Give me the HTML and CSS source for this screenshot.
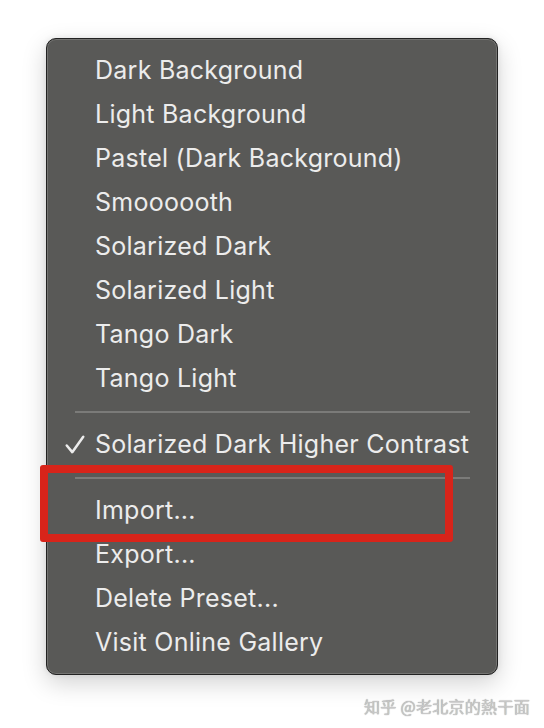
FILE: index.html
```html
<!DOCTYPE html>
<html>
<head>
<meta charset="utf-8">
<link rel="stylesheet" href="styles.css">
</head>
<body>
<div class="page">
  <div class="menu">
    <div class="item">Dark Background</div>
    <div class="item">Light Background</div>
    <div class="item">Pastel (Dark Background)</div>
    <div class="item">Smoooooth</div>
    <div class="item">Solarized Dark</div>
    <div class="item">Solarized Light</div>
    <div class="item">Tango Dark</div>
    <div class="item">Tango Light</div>
    <div class="sep"></div>
    <div class="item checked"><svg class="check" viewBox="0 0 20 20" width="22" height="22"><path d="M2.5 10.5 L7.5 16.5 L17.5 2.5" fill="none" stroke="#ececec" stroke-width="2.3" stroke-linecap="round" stroke-linejoin="round"/></svg>Solarized Dark Higher Contrast</div>
    <div class="sep"></div>
    <div class="item">Import...</div>
    <div class="item">Export...</div>
    <div class="item">Delete Preset...</div>
    <div class="item">Visit Online Gallery</div>
    <div class="highlight"></div>
  </div>
  <div class="watermark">知乎 @老北京的熱干面</div>
</div>
</body>
</html>
```
FILE: styles.css
```css
html, body {
  margin: 0;
  padding: 0;
  background: #ffffff;
}
.page {
  width: 544px;
  height: 728px;
  padding: 38px 0 0 46px;
  box-sizing: border-box;
  font-family: "Inter", "Noto Sans", sans-serif;
}
.menu {
  position: relative;
  width: 452px;
  box-sizing: border-box;
  padding: 10px 0 9px;
  background: #595957;
  border: 1px solid #222;
  border-radius: 10px;
  box-shadow: inset 0 0 0 1px #747472, 0 8px 24px rgba(0,0,0,0.18), 0 0 6px rgba(0,0,0,0.08);
}
.item {
  position: relative;
  height: 44px;
  display: flex;
  align-items: center;
  padding-left: 48px;
  font-size: 25px;
  color: #ececec;
  letter-spacing: 0.25px;
  margin-top: -1px;
  margin-bottom: 1px;
}
.check {
  position: absolute;
  left: 17px;
  top: 12px;
}
.sep {
  height: 22px;
  display: flex;
  align-items: center;
  padding: 0 27px 0 28px;
}
.sep::before {
  content: "";
  flex: 1;
  height: 2px;
  background: #7b7b79;
}
.highlight {
  position: absolute;
  left: -7px;
  top: 426px;
  width: 413px;
  height: 77px;
  box-sizing: border-box;
  border: 8px solid #d8241a;
  border-radius: 3px;
}
.watermark {
  margin-top: 19px;
  padding-right: 14px;
  text-align: right;
  font-family: "Noto Sans CJK SC", sans-serif;
  font-size: 16px;
  letter-spacing: 0.3px;
  color: #c8c8c8;
  text-shadow: 0 0 1px #888;
}
```
